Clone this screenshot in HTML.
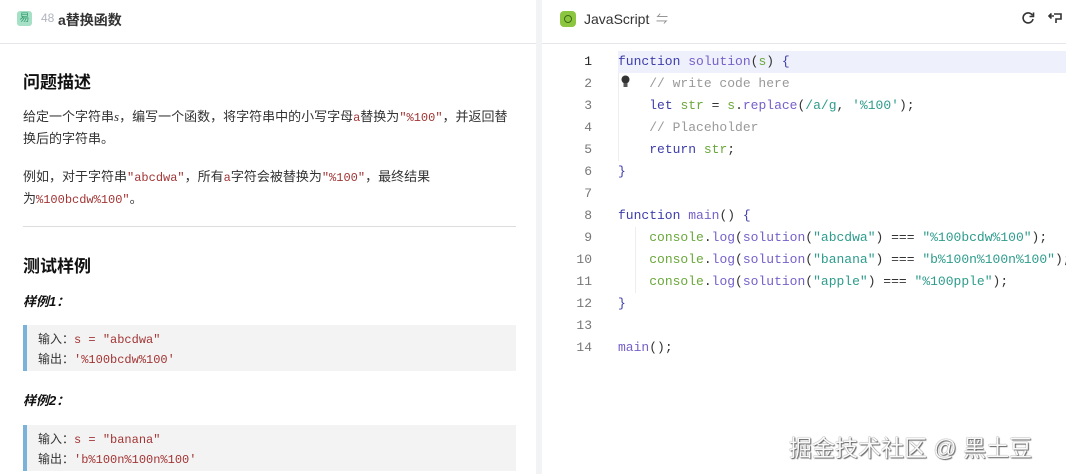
<!DOCTYPE html>
<html><head><meta charset="utf-8"><style>
*{margin:0;padding:0;box-sizing:border-box}
body{width:1066px;height:474px;overflow:hidden;background:#fff;font-family:"Liberation Sans","Noto Sans CJK SC",sans-serif;color:#222;position:relative}
.left{position:absolute;left:0;top:0;width:536px;height:474px;background:#fff}
.div{position:absolute;left:536px;top:0;width:6px;height:474px;background:#f2f3f5}
.right{position:absolute;left:542px;top:0;right:0;height:474px;background:#fff}
.hdr{height:44px;border-bottom:1px solid #e4e6eb;position:relative}
.badge{position:absolute;left:17px;top:11px;width:15px;height:15px;border-radius:3px;background:#a6e0c6;color:#2f9b6c;font-size:10px;text-align:center;line-height:15px}
.num{position:absolute;left:41px;top:11px;font-size:12px;color:#b0b4bf}
.ttl{position:absolute;left:58px;top:10px;font-size:14px;font-weight:bold;color:#333}
.c{position:absolute;left:23px;font-size:13px;color:#333;white-space:nowrap}
h2{position:absolute;left:23px;font-size:17px;font-weight:bold;color:#111}
.m{font-family:"Liberation Mono",monospace;color:#a23535;font-size:12px}
.hr{position:absolute;left:23px;width:493px;top:226px;height:1px;background:#ddd}
.box{position:absolute;left:23px;width:493px;height:46px;background:#f3f3f3;border-left:4px solid #7ab2da;font-size:12px;padding:5px 0 0 11px;line-height:19px;color:#333}
.code{position:absolute;left:0;top:0;font-family:"Liberation Mono",monospace;font-size:13px}
.ln{position:absolute;width:50px;text-align:right;color:#777;font-size:13px}
.tx{position:absolute;left:76px;white-space:pre;color:#333}
.k{color:#3d3dab}.f{color:#7660c9}.v{color:#6aa83a}.s{color:#2d9c8c}.cm{color:#999}
</style></head><body>
<div class="left">
 <div class="hdr"><div class="badge">易</div><div class="num">48</div><div class="ttl">a替换函数</div></div>
 <h2 style="top:68px">问题描述</h2>
 <div class="c" style="top:106px">给定一个字符串<i style="font-family:'Liberation Serif',serif">s</i>，编写一个函数，将字符串中的小写字母<span class="m">a</span>替换为<span class="m">"%100"</span>，并返回替</div>
 <div class="c" style="top:128px">换后的字符串。</div>
 <div class="c" style="top:166px">例如，对于字符串<span class="m">"abcdwa"</span>，所有<span class="m">a</span>字符会被替换为<span class="m">"%100"</span>，最终结果</div>
 <div class="c" style="top:188px">为<span class="m">%100bcdw%100"</span>。</div>
 <div class="hr"></div>
 <h2 style="top:252px">测试样例</h2>
 <div class="c" style="top:291px;font-weight:bold;font-style:italic;font-size:13px;color:#111">样例1：</div>
 <div class="box" style="top:325px">输入：<span class="m">s = "abcdwa"</span><br>输出：<span class="m">'%100bcdw%100'</span></div>
 <div class="c" style="top:390px;font-weight:bold;font-style:italic;font-size:13px;color:#111">样例2：</div>
 <div class="box" style="top:425px">输入：<span class="m">s = "banana"</span><br>输出：<span class="m">'b%100n%100n%100'</span></div>
</div>
<div class="div"></div>
<div class="right">
 <div class="hdr">
  <div style="position:absolute;left:18px;top:11px;width:16px;height:16px;border-radius:4px;background:#8cc540"><div style="margin:4px;width:8px;height:8px;border:1.5px solid #3c6b12;border-radius:50%"></div></div>
  <div style="position:absolute;left:42px;top:11px;font-size:14px;color:#333">JavaScript</div>
  <div style="position:absolute;left:114px;top:10px;font-size:12px;color:#888">⇋</div>
  <svg style="position:absolute;left:479px;top:11px" width="14" height="14" viewBox="0 0 14 14"><path d="M11.5 4.5A5 5 0 1 0 12 8" fill="none" stroke="#333" stroke-width="1.6"/><path d="M12.5 1.5v4h-4" fill="none" stroke="#333" stroke-width="1.6"/></svg>
  <svg style="position:absolute;left:506px;top:11px" width="16" height="14" viewBox="0 0 16 14"><path d="M6 3h7v5H8v4" fill="none" stroke="#333" stroke-width="1.6"/><path d="M1 5h5M3.5 2.5l-2.5 2.5 2.5 2.5" fill="none" stroke="#333" stroke-width="1.6"/></svg>
 </div>
 <div style="position:absolute;left:76px;top:51px;right:0;height:22px;background:#eef0fb"></div>
 <div style="position:absolute;left:76px;top:73px;width:1px;height:88px;background:#eee"></div>
 <div style="position:absolute;left:93px;top:227px;width:1px;height:66px;background:#eee"></div>
 <svg style="position:absolute;left:79px;top:75px" width="9" height="13" viewBox="0 0 9 13"><circle cx="4.5" cy="4.5" r="4" fill="#333"/><rect x="2.5" y="8" width="4" height="4" fill="#555"/></svg>
 <div class="code">
  <div class="ln" style="top:54px;color:#222">1</div><div class="tx" style="top:54px"><span class="k">function</span> <span class="f">solution</span>(<span class="v">s</span>) <span class="k">{</span></div>
  <div class="ln" style="top:76px">2</div><div class="tx" style="top:76px">    <span class="cm">// write code here</span></div>
  <div class="ln" style="top:98px">3</div><div class="tx" style="top:98px">    <span class="k">let</span> <span class="v">str</span> = <span class="v">s</span>.<span class="f">replace</span>(<span class="s">/a/g</span>, <span class="s">'%100'</span>);</div>
  <div class="ln" style="top:120px">4</div><div class="tx" style="top:120px">    <span class="cm">// Placeholder</span></div>
  <div class="ln" style="top:142px">5</div><div class="tx" style="top:142px">    <span class="k">return</span> <span class="v">str</span>;</div>
  <div class="ln" style="top:164px">6</div><div class="tx" style="top:164px"><span class="k">}</span></div>
  <div class="ln" style="top:186px">7</div>
  <div class="ln" style="top:208px">8</div><div class="tx" style="top:208px"><span class="k">function</span> <span class="f">main</span>() <span class="k">{</span></div>
  <div class="ln" style="top:230px">9</div><div class="tx" style="top:230px">    <span class="v">console</span>.<span class="f">log</span>(<span class="f">solution</span>(<span class="s">"abcdwa"</span>) === <span class="s">"%100bcdw%100"</span>);</div>
  <div class="ln" style="top:252px">10</div><div class="tx" style="top:252px">    <span class="v">console</span>.<span class="f">log</span>(<span class="f">solution</span>(<span class="s">"banana"</span>) === <span class="s">"b%100n%100n%100"</span>);</div>
  <div class="ln" style="top:274px">11</div><div class="tx" style="top:274px">    <span class="v">console</span>.<span class="f">log</span>(<span class="f">solution</span>(<span class="s">"apple"</span>) === <span class="s">"%100pple"</span>);</div>
  <div class="ln" style="top:296px">12</div><div class="tx" style="top:296px"><span class="k">}</span></div>
  <div class="ln" style="top:318px">13</div>
  <div class="ln" style="top:340px">14</div><div class="tx" style="top:340px"><span class="f">main</span>();</div>
 </div>
 <div style="position:absolute;left:247px;top:429px;font-size:23px;color:#fafafa;text-shadow:0 0 1px #444,1px 1px 1px #666;white-space:nowrap">掘金技术社区 @ 黑土豆</div>
</div>
</body></html>
